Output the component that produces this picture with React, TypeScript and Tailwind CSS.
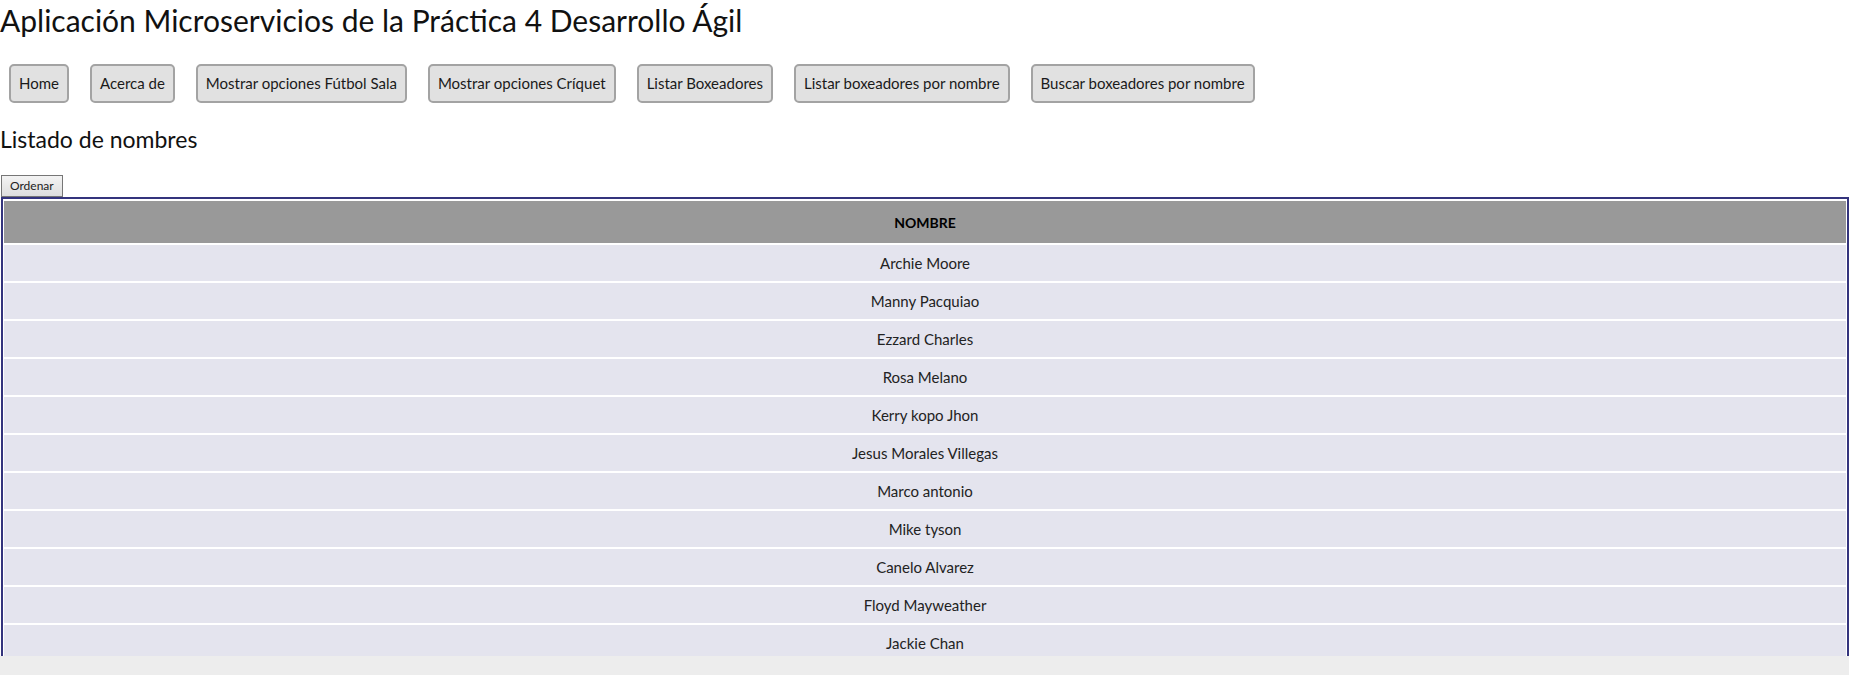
const botones = [
  "Home",
  "Acerca de",
  "Mostrar opciones Fútbol Sala",
  "Mostrar opciones Críquet",
  "Listar Boxeadores",
  "Listar boxeadores por nombre",
  "Buscar boxeadores por nombre",
];

const nombres = [
  "Archie Moore",
  "Manny Pacquiao",
  "Ezzard Charles",
  "Rosa Melano",
  "Kerry kopo Jhon",
  "Jesus Morales Villegas",
  "Marco antonio",
  "Mike tyson",
  "Canelo Alvarez",
  "Floyd Mayweather",
  "Jackie Chan",
];

export default function App() {
  return (
    <div className="flex h-[675px] w-[1849px] flex-col overflow-hidden bg-white font-['Lato',sans-serif] text-black">
      <div className="min-h-0 flex-1 overflow-hidden">
        <h1 className="m-0 text-[30px] leading-[40px] font-normal text-[#111]">
          Aplicación Microservicios de la Práctica 4 Desarrollo Ágil
        </h1>

        <nav className="mt-[24px] ml-[9px] flex gap-[21px]">
          {botones.map((b) => (
            <button
              key={b}
              className="flex h-[39px] items-center rounded-[5px] border-2 border-[#a3a3a3] bg-[#e1e1e1] px-[8px] text-[15px] text-[#1a1a1a]"
            >
              {b}
            </button>
          ))}
        </nav>

        <h2 className="mt-[22px] text-[23px] leading-[28px] font-normal text-[#111]">Listado de nombres</h2>

        <button className="mt-[22px] ml-[1px] block h-[22px] border border-[#767676] bg-gradient-to-b from-[#f3f3f3] to-[#dedede] px-[8px] text-[12px] leading-[20px] text-[#222]">
          Ordenar
        </button>

        <table className="ml-[1px] w-[1848px] border-separate border-spacing-x-[1px] border-spacing-y-[2px] border-2 border-[#34347d]">
          <thead>
            <tr>
              <th className="h-[42px] bg-[#999999] text-center text-[14px] font-bold text-black">NOMBRE</th>
            </tr>
          </thead>
          <tbody>
            {nombres.map((n) => (
              <tr key={n}>
                <td className="h-[36px] bg-[#e4e4ee] text-center text-[15px] text-[#222]">{n}</td>
              </tr>
            ))}
          </tbody>
        </table>
      </div>
      <div className="h-[19px] shrink-0 bg-[#ededed]" />
    </div>
  );
}
